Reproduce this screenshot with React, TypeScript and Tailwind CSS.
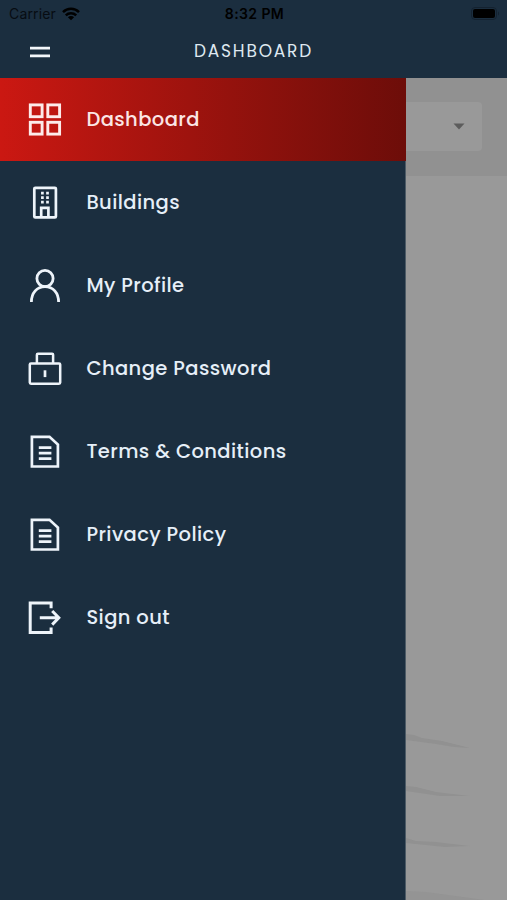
import type { ReactNode } from 'react';

const DashboardIcon = () => (
  <g strokeWidth="2.9">
    <rect x="3.3" y="2.9" width="11.8" height="11.8" />
    <rect x="20.8" y="2.9" width="11.8" height="11.8" />
    <rect x="3.3" y="20.3" width="11.8" height="11.8" />
    <rect x="20.8" y="20.3" width="11.8" height="11.8" />
  </g>
);

const BuildingIcon = () => (
  <g strokeWidth="2.7">
    <rect x="7.3" y="2.8" width="21.6" height="29.6" rx="1" />
    <path d="M14.2 32V22.8h7.2V32" />
    <path d="M15.4 6.8v11.6M20.5 6.8v11.6" strokeDasharray="2.6 1.9" />
  </g>
);

const ProfileIcon = () => (
  <g strokeWidth="2.8">
    <circle cx="18" cy="10.5" r="8.1" />
    <path d="M4.4 34C4.4 24.8 10 18.6 18 18.6S31.6 24.8 31.6 34" />
  </g>
);

const LockIcon = () => (
  <g strokeWidth="2.5">
    <rect x="2.8" y="12.4" width="30.4" height="20.4" rx="1.2" />
    <path d="M9.9 12.4V3.8a1 1 0 0 1 1-1h14.2a1 1 0 0 1 1 1v8.6" />
    <path d="M18 19.3v6.8" strokeWidth="2.7" />
  </g>
);

const DocumentIcon = () => (
  <g strokeWidth="2.7">
    <path d="M4.9 2.8h17.6l8.4 7.8v21.9h-26z" />
    <path d="M11.8 13.7h12.6M11.8 19.2h12.6M11.8 24.7h12.6" />
  </g>
);

const SignOutIcon = () => (
  <g strokeWidth="3">
    <path d="M24.1 8.2V3H3.2v29.4h20.9v-5" />
    <path d="M12.8 17.8h18.6M25.2 11l6.6 6.8-6.6 6.8" />
  </g>
);

const menu: { label: string; icon: ReactNode; active?: boolean }[] = [
  { label: 'Dashboard', icon: <DashboardIcon />, active: true },
  { label: 'Buildings', icon: <BuildingIcon /> },
  { label: 'My Profile', icon: <ProfileIcon /> },
  { label: 'Change Password', icon: <LockIcon /> },
  { label: 'Terms & Conditions', icon: <DocumentIcon /> },
  { label: 'Privacy Policy', icon: <DocumentIcon /> },
  { label: 'Sign out', icon: <SignOutIcon /> },
];

function StatusBar() {
  return (
    <div className="grid h-[27px] grid-cols-3 items-center pl-[9px] pr-[7px] font-['Inter',sans-serif] text-[14px] text-black">
      <div className="flex items-center gap-[6px]">
        <span className="tracking-[0.15px] text-[#070c12]">Carrier</span>
        <svg width="18" height="14" viewBox="0 0 18 14" fill="none" stroke="currentColor" strokeWidth="2.5">
          <path d="M1 5.1a11.4 11.4 0 0 1 16 0M3.8 8.3a7.4 7.4 0 0 1 10.4 0" />
          <path d="M9 13.3 5.9 10.2a4.4 4.4 0 0 1 6.2 0z" fill="currentColor" stroke="none" />
        </svg>
      </div>
      <span className="whitespace-nowrap text-center font-semibold tracking-[0.4px]">8:32 PM</span>
      <div className="flex justify-end">
        <svg width="29" height="13" viewBox="0 0 29 13">
          <rect x="0.5" y="0.5" width="25" height="12" rx="3.5" fill="none" stroke="#142230" />
          <rect x="2" y="2" width="22" height="9" rx="2" />
          <path d="M27 4.5v4c1.5-.7 1.5-3.3 0-4z" fill="#142230" />
        </svg>
      </div>
    </div>
  );
}

function Header() {
  return (
    <div className="grid h-[51px] grid-cols-[1fr_auto_1fr] items-center pb-px">
      <div className="pl-[30px]">
        <svg width="20" height="12" viewBox="0 0 20 12" fill="none" stroke="#f3f6fa" strokeWidth="2.7">
          <path d="M0 2.2h20M0 9.8h20" />
        </svg>
      </div>
      <h1 className="text-[17px] tracking-[1.8px] text-[#dfe8f0]">DASHBOARD</h1>
    </div>
  );
}

function Drawer() {
  return (
    <nav className="w-[406px] shrink-0 border-r border-[#4d5b66] bg-[#1b2e3f]">
      {menu.map(({ label, icon, active }) => (
        <a
          key={label}
          className={`-mr-px flex h-[83px] items-center pl-[27px] ${
            active ? 'bg-linear-to-r from-[#cb1812] to-[#6d0d09]' : ''
          }`}
        >
          <svg
            width="36"
            height="35"
            viewBox="0 0 36 35"
            fill="none"
            stroke="currentColor"
            className={active ? 'text-[#fdebea]' : 'text-[#eef4fa]'}
          >
            {icon}
          </svg>
          <span
            className={`ml-[23.4px] whitespace-nowrap pt-px text-[19.5px] font-medium tracking-[0.42px] [font-feature-settings:'liga'_1] ${
              active ? 'text-[#fbe6e5]' : 'text-[#e6eff8]'
            }`}
          >
            {label}
          </span>
        </a>
      ))}
    </nav>
  );
}

function Content() {
  return (
    <main className="flex flex-1 flex-col justify-between bg-[#999999]">
      <div className="h-[98px] bg-[#919191] pr-[25px] pt-6">
        <div className="flex h-[49px] items-center justify-end rounded-r-[4px] bg-[#999999] pr-[17px]">
          <svg width="12" height="7" viewBox="0 0 12 7" className="text-[#5c5c5c]">
            <path d="M0.5 0.5h11L6 6.5z" fill="currentColor" />
          </svg>
        </div>
      </div>
      <svg width="101" height="170" viewBox="0 0 101 170" fill="#919191">
        <path d="M0 4l8 1 8 3 20 3 28 7-16-1-18-3L0 10z" />
        <path d="M0 56l10 1 20 5 34 4-30 0L0 61z" />
        <path d="M0 108l10 3 20 1 34 4-25 1L0 113z" />
        <path d="M0 161l20 1 44 6 14 2H0z" opacity="0.7" />
      </svg>
    </main>
  );
}

export default function App() {
  return (
    <div className="flex h-[900px] w-[507px] flex-col overflow-hidden bg-[#1b2e3f] font-['Poppins','Inter',sans-serif]">
      <StatusBar />
      <Header />
      <div className="flex flex-1">
        <Drawer />
        <Content />
      </div>
    </div>
  );
}
